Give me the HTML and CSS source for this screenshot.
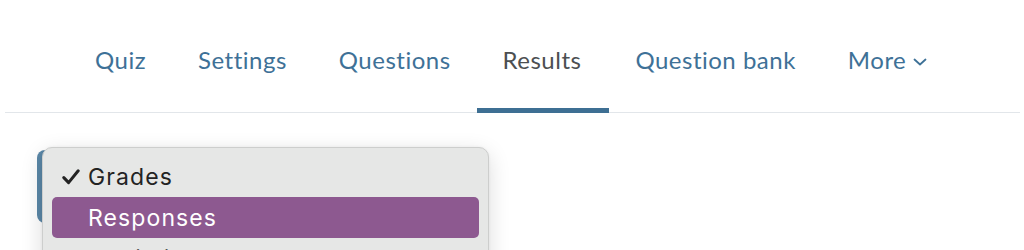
FILE: index.html
```html
<!DOCTYPE html>
<html lang="en">
<head>
<meta charset="utf-8">
<title>Quiz results</title>
<link rel="stylesheet" href="styles.css">
</head>
<body>
<nav class="tabs">
  <a class="tab" href="#">Quiz</a>
  <a class="tab" href="#">Settings</a>
  <a class="tab" href="#">Questions</a>
  <a class="tab active" href="#">Results</a>
  <a class="tab" href="#">Question bank</a>
  <a class="tab more" href="#">More<svg class="chev" viewBox="0 0 14 8" width="14" height="8"><path d="M1.5 1.5 L7 6.5 L12.5 1.5" fill="none" stroke="currentColor" stroke-width="1.8" stroke-linecap="round" stroke-linejoin="round"/></svg></a>
</nav>
<main class="content">
  <div class="picker">
    <div class="select"></div>
    <ul class="menu">
      <li class="opt checked"><svg class="check" viewBox="0 0 18 16" width="18" height="16"><path d="M1.8 8.6 L6.6 13.6 L16.2 1.8" fill="none" stroke="currentColor" stroke-width="3" stroke-linecap="round" stroke-linejoin="round"/></svg>Grades</li>
      <li class="opt hl">Responses</li>
      <li class="opt">Statistics</li>
    </ul>
  </div>
</main>
</body>
</html>
```
FILE: styles.css
```css
html, body {
  margin: 0;
  padding: 0;
  background: #ffffff;
  height: 250px;
  overflow: hidden;
}
body {
  font-family: "Lato", "Open Sans", sans-serif;
}
.tabs {
  display: flex;
  margin: 0 4px 0 5px;
  padding: 0 0 0 64px;
  border-bottom: 1px solid #e2e6ea;
}
.tab {
  display: flex;
  align-items: flex-start;
  height: 113px;
  padding: 45px 26px 0;
  margin-bottom: -1px;
  box-sizing: border-box;
  border-bottom: 5px solid transparent;
  color: #3e7197;
  font-size: 24px;
  line-height: 29px;
  text-decoration: none;
  letter-spacing: 0.5px;
}
.tab.active {
  color: #4c4f52;
  border-bottom-color: #3e6f93;
  padding-right: 28px;
}
.chev {
  margin-left: 7px;
  margin-top: 13px;
}
.content {
  padding: 37px 0 0 37px;
}
.picker {
  position: relative;
}
.select {
  width: 120px;
  height: 73px;
  background: #5a87a7;
  border-radius: 8px;
}
.menu {
  position: absolute;
  left: 5px;
  top: -3px;
  width: 447px;
  height: 140px;
  box-sizing: border-box;
  margin: 0;
  padding: 8px 9px 0;
  list-style: none;
  background: #e6e7e6;
  border: 1px solid #cdcecd;
  border-radius: 10px;
  box-shadow: 0 6px 22px rgba(0, 0, 0, 0.14), 0 0 3px rgba(0, 0, 0, 0.06);
  font-family: "Inter", "Liberation Sans", sans-serif;
  font-size: 23px;
  letter-spacing: 1.1px;
  color: #232323;
}
.opt {
  position: relative;
  height: 41px;
  display: flex;
  align-items: center;
  padding-left: 36px;
  border-radius: 5px;
}
.opt.hl {
  background: #8d5990;
  color: #ffffff;
}
.check {
  position: absolute;
  left: 10px;
  top: 13px;
  color: #232323;
}
```
